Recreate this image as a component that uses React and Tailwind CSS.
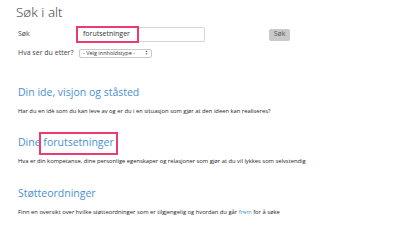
import React from 'react';

// søkefelt med markering
const SearchRow = () => {
  return (
    <div className="flex items-center h-[17px] mt-[6px]">
      <div className="w-[61px] pl-[2px] text-[7px] text-[#444]">Søk</div>
      <div className="relative">
        <div className="w-[128px] h-[15px] border border-[#d4d4d4] rounded-[2px] bg-white flex items-center pl-[5px] text-[7px] text-[#333]">
          forutsetninger
        </div>
        <div className="absolute left-[-1px] top-[-1px] w-[63px] h-[17px] border-2 border-[#ec3b72]"></div>
      </div>
      <button className="ml-[64px] w-[21px] h-[12px] bg-[#c9c9c9] rounded-[2px] text-[7px] text-[#555] flex items-center justify-center">
        Søk
      </button>
    </div>
  );
};

const TypeRow = () => {
  return (
    <div className="flex items-center h-[10px] mt-[5px]">
      <div className="w-[63px] pl-[2px] text-[7px] text-[#444] whitespace-nowrap">Hva ser du etter?</div>
      <div className="w-[73px] h-[9px] border border-[#c8c8c8] rounded-[2px] bg-white flex items-center justify-between pl-[3px] pr-[3px] text-[5.5px] text-[#333] whitespace-nowrap">
        <span>- Velg innholdstype -</span>
        <span className="flex flex-col leading-[3px] text-[3px] text-[#555]">
          <span>▲</span>
          <span>▼</span>
        </span>
      </div>
    </div>
  );
};

// seksjon med overskrift og ingress
const Section = ({ title, children, className }) => {
  return (
    <div className={className}>
      <h2 className="text-[10.5px] leading-[12px] text-[#4a8fd3]">{title}</h2>
      <p className="mt-[9px] text-[5.8px] leading-[8px] text-[#222] whitespace-nowrap">{children}</p>
    </div>
  );
};

export default function App() {
  return (
    <div className="w-[420px] h-[250px] bg-white overflow-hidden pl-[16px] pt-[4px]" style={{ fontFamily: '"Open Sans", sans-serif' }}>
      <h1 className="text-[13.5px] leading-[16px] font-light text-[#333]">Søk i alt</h1>
      <SearchRow />
      <TypeRow />

      <Section className="mt-[28px] pl-[2px]" title="Din ide, visjon og ståsted">
        Har du en idè som du kan leve av og er du i en situasjon som gjør at den ideen kan realiseres?
      </Section>

      <Section
        className="mt-[21px] pl-[2px]"
        title={
          <>
            Dine{' '}
            <span className="relative">
              forutsetninger
              <span className="absolute left-[-4px] right-[-4px] top-[-3px] bottom-[-6px] border-2 border-[#ec3b72]"></span>
            </span>
          </>
        }
      >
        Hva er din kompetanse, dine personlige egenskaper og relasjoner som gjør at du vil lykkes som selvstendig
      </Section>

      <Section className="mt-[22px] pl-[2px]" title="Støtteordninger">
        Finn en oversikt over hvilke støtteordninger som er tilgjengelig og hvordan du går{' '}
        <span className="text-[#4a8fd3]">frem</span> for å søke
      </Section>
    </div>
  );
}
